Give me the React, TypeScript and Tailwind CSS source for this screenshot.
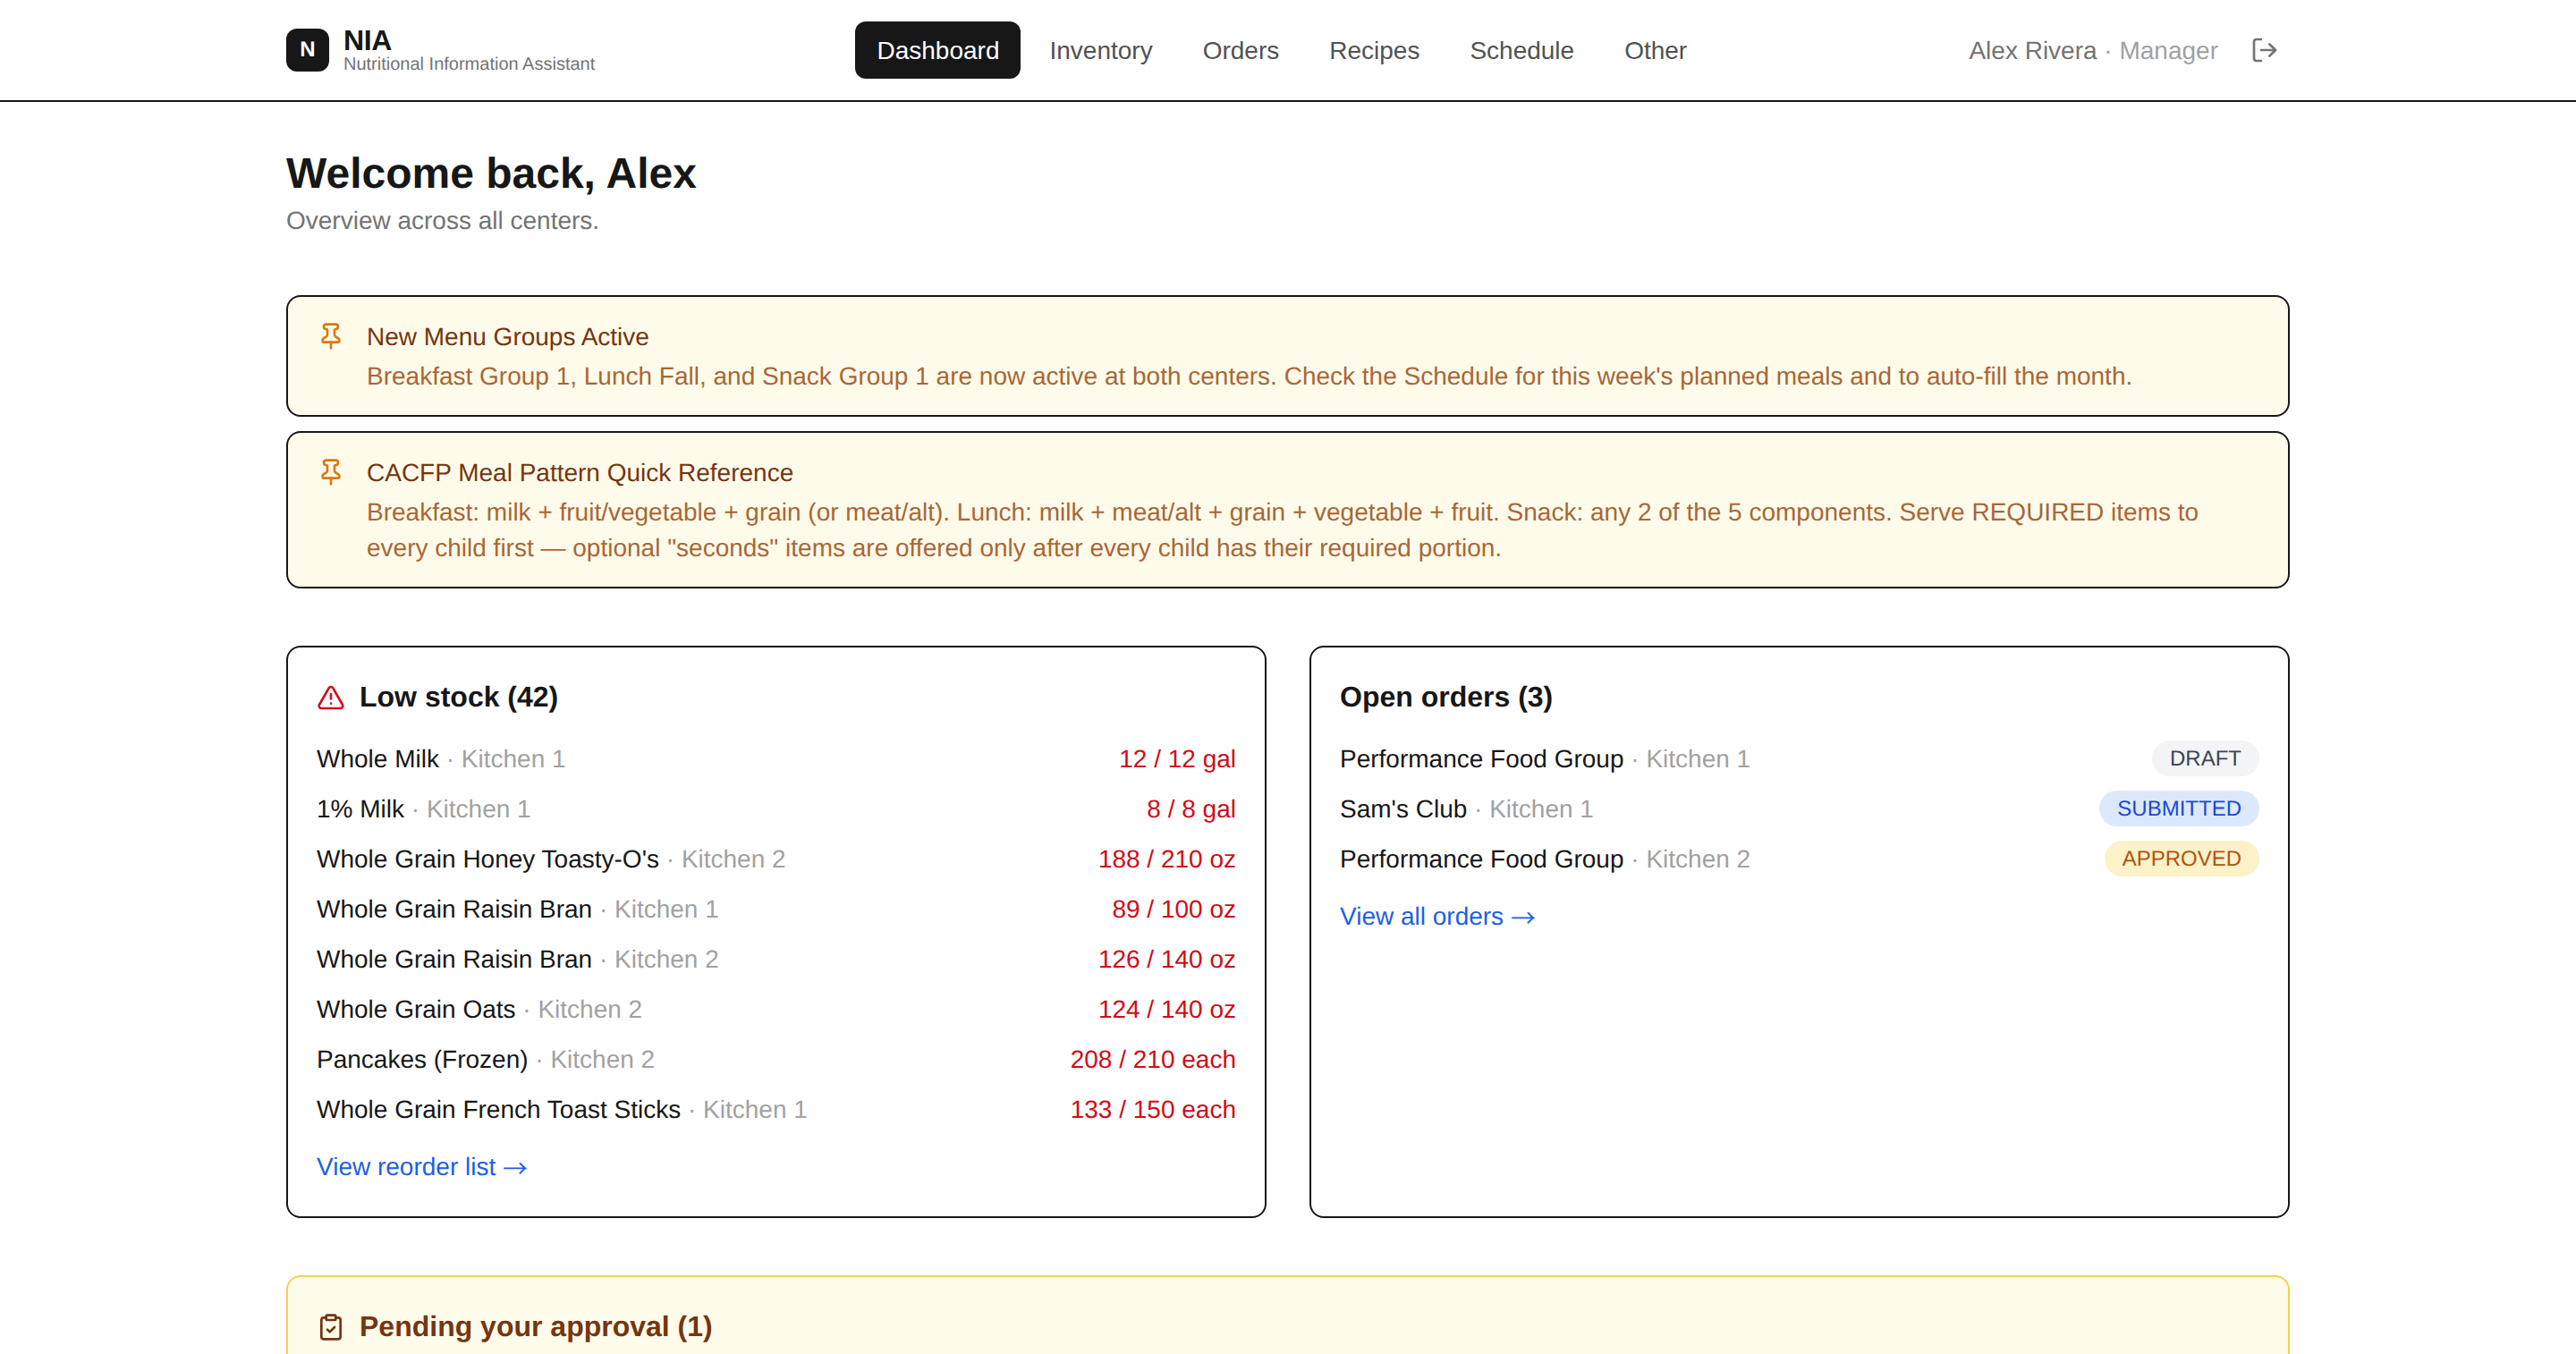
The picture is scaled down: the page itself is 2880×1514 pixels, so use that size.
import { useState } from 'react';
import { ClipboardCheck, LogOut, Pin, TriangleAlert } from 'lucide-react';

const navItems = ['Dashboard', 'Inventory', 'Orders', 'Recipes', 'Schedule', 'Other'];

const announcements = [
  {
    title: 'New Menu Groups Active',
    body: "Breakfast Group 1, Lunch Fall, and Snack Group 1 are now active at both centers. Check the Schedule for this week's planned meals and to auto-fill the month.",
  },
  {
    title: 'CACFP Meal Pattern Quick Reference',
    body: 'Breakfast: milk + fruit/vegetable + grain (or meat/alt). Lunch: milk + meat/alt + grain + vegetable + fruit. Snack: any 2 of the 5 components. Serve REQUIRED items to every child first — optional "seconds" items are offered only after every child has their required portion.',
  },
];

const lowStockTotal = 42;

const lowStock = [
  { name: 'Whole Milk', center: 'Kitchen 1', onHand: 12, par: 12, unit: 'gal' },
  { name: '1% Milk', center: 'Kitchen 1', onHand: 8, par: 8, unit: 'gal' },
  { name: "Whole Grain Honey Toasty-O's", center: 'Kitchen 2', onHand: 188, par: 210, unit: 'oz' },
  { name: 'Whole Grain Raisin Bran', center: 'Kitchen 1', onHand: 89, par: 100, unit: 'oz' },
  { name: 'Whole Grain Raisin Bran', center: 'Kitchen 2', onHand: 126, par: 140, unit: 'oz' },
  { name: 'Whole Grain Oats', center: 'Kitchen 2', onHand: 124, par: 140, unit: 'oz' },
  { name: 'Pancakes (Frozen)', center: 'Kitchen 2', onHand: 208, par: 210, unit: 'each' },
  { name: 'Whole Grain French Toast Sticks', center: 'Kitchen 1', onHand: 133, par: 150, unit: 'each' },
];

const orders = [
  { vendor: 'Performance Food Group', center: 'Kitchen 1', status: 'DRAFT' },
  { vendor: "Sam's Club", center: 'Kitchen 1', status: 'SUBMITTED' },
  { vendor: 'Performance Food Group', center: 'Kitchen 2', status: 'APPROVED' },
];

const statusStyles: Record<string, string> = {
  DRAFT: 'bg-[#f3f4f6] text-[#3c4555]',
  SUBMITTED: 'bg-[#dce9fd] text-[#2148d2]',
  APPROVED: 'bg-[#fcf2c9] text-[#b15410]',
};

function Header() {
  const [active, setActive] = useState('Dashboard');

  return (
    <header className="border-b-2 border-neutral-900">
      <div className="mx-auto flex h-28 w-[2240px] items-center justify-between">
        <div className="flex items-center gap-4">
          <div className="flex size-12 items-center justify-center rounded-xl bg-neutral-900 text-[24px] font-bold text-white">N</div>
          <div>
            <p className="-translate-y-px text-[32px] leading-[32px] font-bold tracking-[-0.01em]">NIA</p>
            <p className="text-[20px] leading-[20px] text-neutral-500">Nutritional Information Assistant</p>
          </div>
        </div>
        <nav className="flex gap-2">
          {navItems.map((item) => (
            <button
              key={item}
              onClick={() => setActive(item)}
              className={`rounded-xl px-6 py-3 text-[28px] leading-[40px] ${item === active ? 'bg-neutral-900 text-white' : 'text-neutral-600'}`}
            >
              <span className="block translate-y-px">{item}</span>
            </button>
          ))}
        </nav>
        <div className="flex items-center gap-6">
          <span className="translate-y-px text-[28px] leading-[40px] text-neutral-500">
            Alex Rivera <span className="text-neutral-400">· Manager</span>
          </span>
          <button aria-label="Sign out" className="p-3 text-neutral-500">
            <LogOut className="size-8" />
          </button>
        </div>
      </div>
    </header>
  );
}

function Announcement({ title, body }: { title: string; body: string }) {
  return (
    <div className="flex gap-6 rounded-2xl border-2 border-neutral-900 bg-[#fefbea] px-8 py-6 text-[28px] leading-[40px]">
      <Pin className="mt-1 size-8 shrink-0 text-[#dc7714]" />
      <div className="translate-y-px">
        <p className="text-[#753510]">{title}</p>
        <p className="mt-1 text-[#a86737]">{body}</p>
      </div>
    </div>
  );
}

function CardLink({ children }: { children: string }) {
  return (
    <a href="#" className="mt-6 mb-1 block h-10 translate-y-px text-[28px] leading-[40px] text-[#205fe6]">
      {children} <span className="inline-block translate-y-[3px] font-['Noto_Sans_CJK_JP',sans-serif] leading-none">→</span>
    </a>
  );
}

export default function App() {
  return (
    <div className="h-[1514px] overflow-hidden bg-white font-['Liberation_Sans',Arial,sans-serif] text-neutral-900 antialiased [text-rendering:geometricPrecision]">
      <Header />
      <main className="mx-auto w-[2240px] py-12">
        <h1 className="translate-y-px text-[48px] leading-[64px] font-bold">Welcome back, Alex</h1>
        <p className="translate-y-px text-[28px] leading-[40px] text-neutral-500">Overview across all centers.</p>

        <div className="mt-16 space-y-4">
          {announcements.map((a) => (
            <Announcement key={a.title} {...a} />
          ))}
        </div>

        <div className="mt-16 grid grid-cols-2 gap-12">
          <section className="rounded-2xl border-2 border-neutral-900 p-8">
            <h2 className="mb-6 flex items-center gap-4 text-[32px] leading-[48px] font-bold">
              <TriangleAlert className="size-8 text-[#d40f1a]" />
              <span className="-translate-y-px">Low stock ({lowStockTotal})</span>
            </h2>
            <ul className="space-y-4 text-[28px] leading-[40px]">
              {lowStock.map((item) => (
                <li key={item.name + item.center} className="flex translate-y-px justify-between">
                  <span>
                    {item.name} <span className="text-neutral-400">· {item.center}</span>
                  </span>
                  <span className="text-[#d00b18]">{`${item.onHand} / ${item.par} ${item.unit}`}</span>
                </li>
              ))}
            </ul>
            <CardLink>View reorder list</CardLink>
          </section>

          <section className="rounded-2xl border-2 border-neutral-900 p-8">
            <h2 className="mb-6 -translate-y-px text-[32px] leading-[48px] font-bold">Open orders ({orders.length})</h2>
            <ul className="space-y-4 text-[28px] leading-[40px]">
              {orders.map((order) => (
                <li key={order.vendor + order.center} className="flex items-center justify-between">
                  <span className="translate-y-px">
                    {order.vendor} <span className="text-neutral-400">· {order.center}</span>
                  </span>
                  <span className={`rounded-full px-5 pt-[5px] pb-[3px] text-[24px] leading-[32px] ${statusStyles[order.status]}`}>{order.status}</span>
                </li>
              ))}
            </ul>
            <CardLink>View all orders</CardLink>
          </section>
        </div>

        <section className="mt-16 h-64 rounded-2xl border-2 border-[#f5d04e] bg-[#fefbea] p-8">
          <h2 className="flex items-center gap-4 text-[32px] leading-[48px] font-bold text-[#753510]">
            <ClipboardCheck className="size-8" />
            <span className="-translate-y-px">Pending your approval (1)</span>
          </h2>
        </section>
      </main>
    </div>
  );
}
